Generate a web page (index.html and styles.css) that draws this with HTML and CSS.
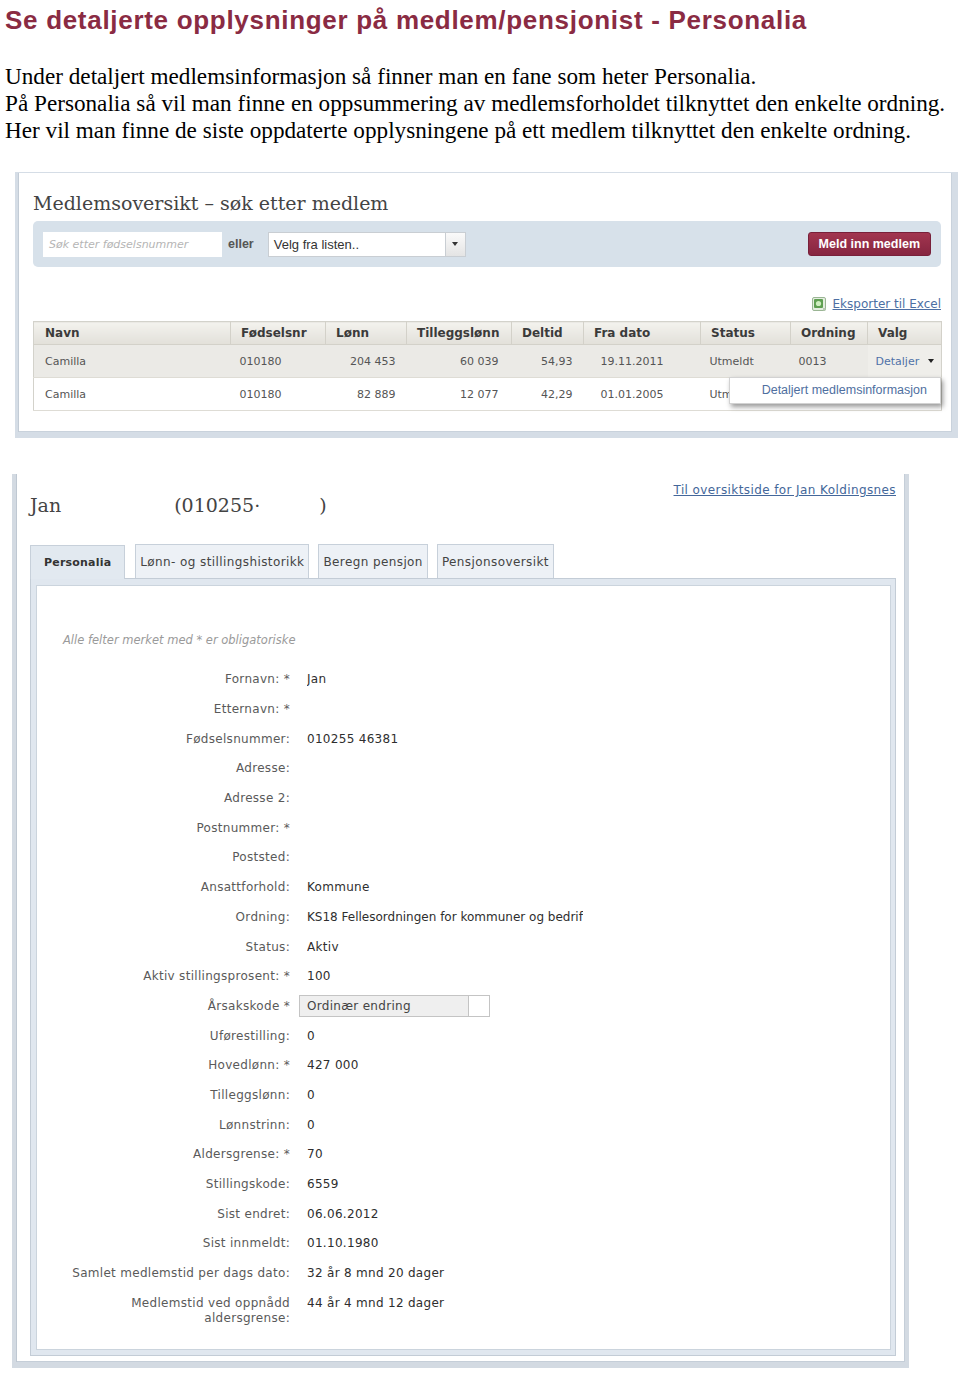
FILE: index.html
```html
<!DOCTYPE html>
<html lang="no">
<head>
<meta charset="utf-8">
<title>Se detaljerte opplysninger – Personalia</title>
<link rel="stylesheet" href="styles.css">
</head>
<body>
<h1 class="title">Se detaljerte opplysninger på medlem/pensjonist - Personalia</h1>
<p class="intro">Under detaljert medlemsinformasjon så finner man en fane som heter Personalia.<br>På Personalia så vil man finne en oppsummering av medlemsforholdet tilknyttet den enkelte ordning.<br>Her vil man finne de siste oppdaterte opplysningene på ett medlem tilknyttet den enkelte ordning.</p>

<section class="shot shot-search">
  <h2 class="shot-heading">Medlemsoversikt – søk etter medlem</h2>
  <div class="searchbar">
    <div class="search-input">Søk etter fødselsnummer</div>
    <span class="or">eller</span>
    <div class="select"><span class="select-text">Velg fra listen..</span><span class="select-btn"><span class="tri"></span></span></div>
    <span class="btn-primary">Meld inn medlem</span>
  </div>
  <div class="export">
    <svg class="xls" width="16" height="16" viewBox="0 0 16 16"><rect x="1.5" y="1.5" width="13" height="13" rx="1.5" fill="#e4ede0" stroke="#9ab594"/><rect x="3" y="3" width="9" height="9" rx="1" fill="#5f9f52"/><circle cx="7.5" cy="7.5" r="2.6" fill="#cfeec0"/><path d="M12 12h2.5v2.5H12z" fill="#b7c9b3"/></svg>
    <a class="link" href="#">Eksporter til Excel</a>
  </div>
  <table class="grid">
    <colgroup><col style="width:197px"><col style="width:95px"><col style="width:81px"><col style="width:105px"><col style="width:72px"><col style="width:117px"><col style="width:90px"><col style="width:77px"><col style="width:74px"></colgroup>
    <thead>
      <tr><th class="c-navn">Navn</th><th>Fødselsnr</th><th>Lønn</th><th>Tilleggslønn</th><th>Deltid</th><th>Fra dato</th><th>Status</th><th>Ordning</th><th class="c-last">Valg</th></tr>
    </thead>
    <tbody>
      <tr class="odd"><td class="c-navn">Camilla</td><td>010180</td><td class="num">204 453</td><td class="num num-wide">60 039</td><td class="num">54,93</td><td class="c-date">19.11.2011</td><td>Utmeldt</td><td class="c-tight">0013</td><td class="c-tight valg"><span class="detail">Detaljer</span><span class="tri tri-small"></span><div class="menu">Detaljert medlemsinformasjon</div></td></tr>
      <tr><td class="c-navn">Camilla</td><td>010180</td><td class="num">82 889</td><td class="num num-wide">12 077</td><td class="num">42,29</td><td class="c-date">01.01.2005</td><td class="c-hidden">Utmeldt</td><td class="c-tight">0013</td><td class="c-tight"></td></tr>
    </tbody>
  </table>
</section>

<section class="shot shot-member">
  <div class="member-head">
    <h2 class="member-name"><span class="first">Jan</span>(010255·<span class="gap"></span>)</h2>
    <a class="overview-link" href="#">Til oversiktside for Jan Koldingsnes</a>
  </div>
  <nav class="tabs">
    <span class="tab active">Personalia</span>
    <span class="tab">Lønn- og stillingshistorikk</span>
    <span class="tab">Beregn pensjon</span>
    <span class="tab">Pensjonsoversikt</span>
  </nav>
  <div class="panel">
    <div class="panel-inner">
      <p class="note">Alle felter merket med * er obligatoriske</p>
      <dl class="form">
        <div class="row"><dt>Fornavn: *</dt><dd>Jan</dd></div>
        <div class="row"><dt>Etternavn: *</dt><dd></dd></div>
        <div class="row"><dt>Fødselsnummer:</dt><dd>010255 46381</dd></div>
        <div class="row"><dt>Adresse:</dt><dd></dd></div>
        <div class="row"><dt>Adresse 2:</dt><dd></dd></div>
        <div class="row"><dt>Postnummer: *</dt><dd></dd></div>
        <div class="row"><dt>Poststed:</dt><dd></dd></div>
        <div class="row"><dt>Ansattforhold:</dt><dd>Kommune</dd></div>
        <div class="row"><dt>Ordning:</dt><dd class="dd-clip">KS18 Fellesordningen for kommuner og bedrifter</dd></div>
        <div class="row"><dt>Status:</dt><dd>Aktiv</dd></div>
        <div class="row"><dt>Aktiv stillingsprosent: *</dt><dd>100</dd></div>
        <div class="row"><dt>Årsakskode *</dt><dd class="dd-select"><div class="code-select"><span class="code-text">Ordinær endring</span><span class="code-btn"></span></div></dd></div>
        <div class="row"><dt>Uførestilling:</dt><dd>0</dd></div>
        <div class="row"><dt>Hovedlønn: *</dt><dd>427 000</dd></div>
        <div class="row"><dt>Tilleggslønn:</dt><dd>0</dd></div>
        <div class="row"><dt>Lønnstrinn:</dt><dd>0</dd></div>
        <div class="row"><dt>Aldersgrense: *</dt><dd>70</dd></div>
        <div class="row"><dt>Stillingskode:</dt><dd>6559</dd></div>
        <div class="row"><dt>Sist endret:</dt><dd>06.06.2012</dd></div>
        <div class="row"><dt>Sist innmeldt:</dt><dd>01.10.1980</dd></div>
        <div class="row"><dt>Samlet medlemstid per dags dato:</dt><dd>32 år 8 mnd 20 dager</dd></div>
        <div class="row"><dt>Medlemstid ved oppnådd aldersgrense:</dt><dd>44 år 4 mnd 12 dager</dd></div>
      </dl>
    </div>
  </div>
</section>
</body>
</html>
```

FILE: styles.css
```css
* { box-sizing: border-box; }
html, body { margin: 0; padding: 0; background: #fff; }
body { padding: 0 0 0 5px; width: 960px; }

.title {
  margin: 5px 0 0;
  font: bold 26px/30px "Liberation Sans", Arial, sans-serif;
  letter-spacing: 0.7px;
  color: #8a2b43;
}
.intro {
  margin: 28px 0 0;
  font: 23.2px/27px "Liberation Serif", "Times New Roman", serif;
  color: #000;
  white-space: nowrap;
}

.shot { background: #fff; }

/* ---------- search screenshot ---------- */
.shot-search {
  margin: 28px 0 0 10px;
  width: 943px;
  height: 266px;
  border-style: solid;
  border-color: #d5dde6;
  border-width: 1px 6px 6px 3px;
  padding: 18px 11px 0 15px;
  box-shadow: inset 1px 0 0 #c3ccd6, inset -1px -1px 0 #c9d2dc;
}
.shot-heading {
  margin: 0;
  font: normal 19px/24px "DejaVu Serif", Georgia, serif;
  color: #444;
}
.searchbar {
  margin-top: 6px;
  height: 46px;
  background: #d7e1ea;
  border-radius: 5px;
  display: flex;
  align-items: center;
  padding: 0 10px;
}
.search-input {
  width: 179px;
  height: 25px;
  background: #fff;
  font: italic 11px/25px "DejaVu Sans", sans-serif;
  color: #b5b5b5;
  padding-left: 6px;
}
.or {
  margin: 0 14px 0 6px;
  font: bold 12.5px "Liberation Sans", Arial, sans-serif;
  color: #555;
}
.select {
  width: 198px;
  height: 25px;
  background: #fff;
  border: 1px solid #c9ced3;
  display: flex;
}
.select-text {
  flex: 1;
  font: 13px/23px "Liberation Sans", Arial, sans-serif;
  color: #333;
  padding-left: 5px;
}
.select-btn {
  width: 20px;
  border-left: 1px solid #c9ced3;
  background: linear-gradient(#fafafa, #e4e4e4);
  display: flex;
  align-items: center;
  justify-content: center;
}
.tri {
  display: inline-block;
  width: 0;
  height: 0;
  border-left: 3.5px solid transparent;
  border-right: 3.5px solid transparent;
  border-top: 4px solid #333;
}
.btn-primary {
  margin-left: auto;
  height: 24px;
  padding: 0 10px;
  background: linear-gradient(#a2354f, #862540);
  border: 1px solid #78203a;
  border-radius: 3px;
  color: #fff;
  font: bold 12.5px/22px "Liberation Sans", Arial, sans-serif;
}
.export {
  margin-top: 27px;
  height: 20px;
  display: flex;
  justify-content: flex-end;
  align-items: center;
  gap: 6px;
}
.link {
  font: 12px "DejaVu Sans", Verdana, sans-serif;
  color: #4d6fa3;
  text-decoration: underline;
}

.grid {
  margin-top: 7px;
  width: 908px;
  border-collapse: collapse;
  table-layout: fixed;
  border: 1px solid #d3d2cb;
  font: 11px "DejaVu Sans", Verdana, sans-serif;
  color: #555;
}
.grid th {
  height: 23px;
  padding: 0 0 0 10px;
  text-align: left;
  font: bold 12px "DejaVu Sans", Verdana, sans-serif;
  color: #3b3b3b;
  background: linear-gradient(#f3f2ee, #e2e0d9);
  border-right: 1px solid #d3d1c9;
  border-bottom: 1px solid #d3d1c9;
}
.grid th.c-navn { padding-left: 11px; }
.grid td {
  height: 33px;
  padding: 0 0 0 9px;
  border-bottom: 1px solid #dedcd5;
  white-space: nowrap;
}
.grid tr.odd td { background: #ebeae6; }
.grid td.c-navn { padding-left: 11px; }
.grid td.num { text-align: right; padding: 0 11px 0 0; }
.grid td.num-wide { padding-right: 13px; }
.grid td.c-date { padding-left: 17px; }
.grid td.c-tight { padding-left: 8px; }
.grid td.c-hidden { overflow: hidden; text-overflow: clip; padding-right: 62px; }
.grid tr.odd td.valg { background: #efeeea; }
.valg { position: relative; }
.detail { color: #4f72a8; }
.tri-small { margin-left: 9px; vertical-align: 2px; border-top-color: #222; }
.menu {
  position: absolute;
  right: 0;
  top: 100%;
  width: 212px;
  height: 27px;
  background: #fff;
  border: 1px solid #d2d2d2;
  box-shadow: 2px 3px 5px rgba(0, 0, 0, 0.4);
  font: 12.5px/25px "Liberation Sans", Arial, sans-serif;
  color: #4f6f9f;
  text-align: right;
  padding-right: 13px;
  z-index: 2;
}

/* ---------- member screenshot ---------- */
.shot-member {
  margin: 36px 0 0 7px;
  width: 897px;
  height: 894px;
  border-style: solid;
  border-color: #d3dae2;
  border-width: 0 4px 6px 4px;
  padding: 0 9px 0 14px;
  box-shadow: inset 1px 0 0 #bfc8d2, inset -1px -1px 0 #c5ced8;
}
.member-head {
  height: 44px;
  display: flex;
  justify-content: space-between;
  align-items: flex-start;
}
.member-name {
  margin: 18px 0 0;
  font: normal 19px/26px "DejaVu Serif", Georgia, serif;
  color: #444;
}
.first { margin-right: 113px; }
.gap { display: inline-block; width: 59px; }
.overview-link {
  margin-top: 8px;
  font: 12px/16px "DejaVu Sans", Verdana, sans-serif;
  letter-spacing: 0.4px;
  color: #44679a;
  text-decoration: underline;
}
.tabs {
  margin-top: 26px;
  height: 34px;
  display: flex;
  gap: 9px;
}
.tab {
  height: 34px;
  padding: 2px 4px 0;
  border: 1px solid #c7d0da;
  border-bottom: none;
  background: #edf1f6;
  font: 12px/31px "DejaVu Sans", Verdana, sans-serif;
  letter-spacing: 0.4px;
  color: #444;
}
.tab.active {
  position: relative;
  top: 1px;
  z-index: 1;
  margin-right: 1px;
  padding: 1px 13px 0;
  background: #e2e9f0;
  font-weight: bold;
  font-size: 11px;
  letter-spacing: 0.2px;
  color: #333;
}
.panel {
  height: 778px;
  border: 1px solid #c3ccd6;
  background: #e0e7ef;
  padding: 6px 4px 5px 5px;
}
.panel-inner {
  height: 100%;
  background: #fff;
  border: 1px solid #cbd4dd;
  padding: 46px 0 0 26px;
}
.note {
  margin: 0;
  font: italic 11.5px/16px "DejaVu Sans", Verdana, sans-serif;
  color: #9a9a9a;
}
.form { margin: 17px 0 0; }
.row {
  display: grid;
  grid-template-columns: 227px 276px;
  column-gap: 17px;
  padding: 7.35px 0;
  font: 12px/15px "DejaVu Sans", Verdana, sans-serif;
}
.row dt {
  text-align: right;
  color: #5a5a5a;
  letter-spacing: 0.3px;
}
.row dd {
  margin: 0;
  color: #2e2e2e;
  letter-spacing: 0.3px;
  white-space: nowrap;
  overflow: hidden;
}
.row dd.dd-clip { letter-spacing: 0; }
.row dd.dd-select { overflow: visible; }
.code-select {
  display: flex;
  margin: -4px 0 -3px -8px;
  width: 191px;
  height: 22px;
  border: 1px solid #c4c4c4;
  background: #efefef;
}
.code-text {
  flex: 1;
  padding-left: 7px;
  line-height: 20px;
  color: #444;
}
.code-btn {
  width: 21px;
  background: #fff;
  border-left: 1px solid #c4c4c4;
}
```
